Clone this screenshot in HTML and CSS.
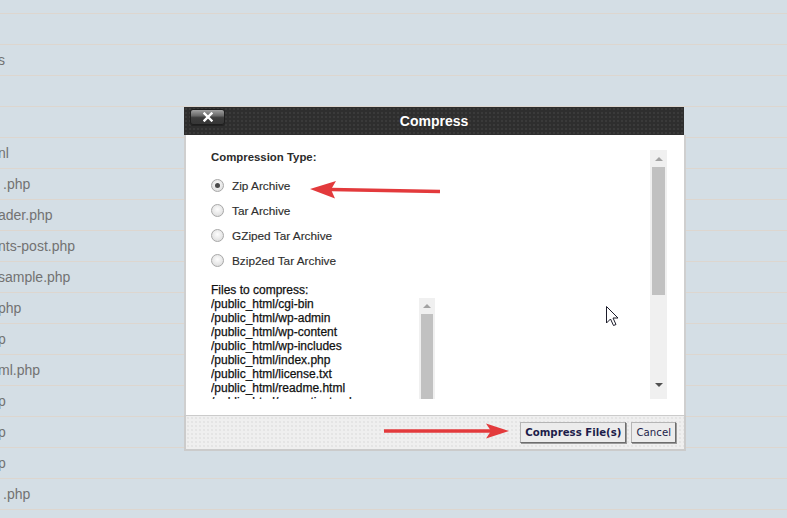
FILE: index.html
```html
<!DOCTYPE html>
<html>
<head>
<meta charset="utf-8">
<link rel="stylesheet" href="styles.css">
</head>
<body>
<div class="files">
  <div class="row-top"></div>
  <div class="row"></div>
  <div class="row"><span class="name">s</span></div>
  <div class="row"></div>
  <div class="row"></div>
  <div class="row"><span class="name">nl</span></div>
  <div class="row"><span class="name shift">.php</span></div>
  <div class="row"><span class="name">ader.php</span></div>
  <div class="row"><span class="name">nts-post.php</span></div>
  <div class="row"><span class="name">sample.php</span></div>
  <div class="row"><span class="name">php</span></div>
  <div class="row"><span class="name">p</span></div>
  <div class="row"><span class="name">ml.php</span></div>
  <div class="row"><span class="name">p</span></div>
  <div class="row"><span class="name">p</span></div>
  <div class="row"><span class="name">p</span></div>
  <div class="row"><span class="name shift">.php</span></div>
  <div class="row"></div>
</div>

<div class="dialog">
  <div class="dlg-head">
    <button class="close" type="button" aria-label="Close">
      <svg width="10" height="10" viewBox="0 0 10 10"><path d="M1.5 1.5 L8.5 8.5 M8.5 1.5 L1.5 8.5" stroke="#fff" stroke-width="2.4" stroke-linecap="square"/></svg>
    </button>
    <div class="title">Compress</div>
    <div></div>
  </div>
  <div class="dlg-body">
    <div class="content">
      <div class="label-b">Compression Type:</div>
      <div class="opts">
        <div class="opt"><span class="radio checked"></span><span>Zip Archive</span></div>
        <div class="opt"><span class="radio"></span><span>Tar Archive</span></div>
        <div class="opt"><span class="radio"></span><span>GZiped Tar Archive</span></div>
        <div class="opt"><span class="radio"></span><span>Bzip2ed Tar Archive</span></div>
      </div>
      <div class="files-title">Files to compress:</div>
      <div class="listbox">
        <div class="lines">
          <div>/public_html/cgi-bin</div>
          <div>/public_html/wp-admin</div>
          <div>/public_html/wp-content</div>
          <div>/public_html/wp-includes</div>
          <div>/public_html/index.php</div>
          <div>/public_html/license.txt</div>
          <div>/public_html/readme.html</div>
          <div>/public_html/wp-activate.php</div>
          <div>/public_html/wp-blog-header.php</div>
        </div>
        <div class="lscroll">
          <div class="lbtn"><span class="tri-up"></span></div>
          <div class="lthumb"></div>
        </div>
      </div>
    </div>
    <div class="vscroll">
      <div class="vbtn"><span class="tri-up"></span></div>
      <div class="vthumb"></div>
      <div class="vspace"></div>
      <div class="vbtn down"><span class="tri-down"></span></div>
    </div>
  </div>
  <div class="dlg-foot">
    <button class="btn strong" type="button">Compress File(s)</button>
    <button class="btn" type="button">Cancel</button>
  </div>
</div>

<svg class="overlay" width="787" height="518" viewBox="0 0 787 518">
  <path d="M331 189.5 L440 191.5" stroke="#e33a3c" stroke-width="3.6" fill="none"/>
  <polygon points="310,189 336,181 331,189.5 335,198.5" fill="#e33a3c"/>
  <path d="M384 431 L492 431" stroke="#e33a3c" stroke-width="3.4" fill="none"/>
  <polygon points="509,431 486,423.5 491,431 486,438.5" fill="#e33a3c"/>
  <path d="M606.5 306.5 V323 L610.5 319 L613.5 325.5 L616 324.5 L613 318 H618 Z" fill="#fff" stroke="#1d1d2b" stroke-width="1" stroke-linejoin="miter"/>
</svg>
</body>
</html>
```
FILE: styles.css
```css
html, body {
  margin: 0;
  padding: 0;
}
body {
  width: 787px;
  height: 518px;
  overflow: hidden;
  background: #d4dee5;
  font-family: "Liberation Sans", Arial, sans-serif;
  position: relative;
}
.files {
  display: flex;
  flex-direction: column;
}
.row-top {
  height: 13px;
}
.row {
  height: 30px;
  border-top: 1px solid #ddd6cf;
  line-height: 30px;
  font-size: 14px;
  color: #727272;
  white-space: nowrap;
}
.name {
  display: inline-block;
  margin-left: -2px;
}
.name.shift {
  margin-left: 3px;
}

.dialog {
  position: absolute;
  left: 184px;
  top: 107px;
  width: 502px;
  display: flex;
  flex-direction: column;
}
.dlg-head {
  height: 28px;
  width: 500px;
  background-color: #2e2e2e;
  background-image: radial-gradient(#3a3a3a 0.8px, transparent 1px);
  background-size: 4px 4px;
  display: grid;
  grid-template-columns: 1fr auto 1fr;
  align-items: center;
}
.close {
  justify-self: start;
  align-self: start;
  margin: 2px 0 0 6px;
  width: 35px;
  height: 16px;
  padding: 0;
  border: 1px solid #1e1e1e;
  border-radius: 3px;
  background: linear-gradient(#a2a2a2 0%, #6a6a6a 40%, #3c3c3c 55%, #363636 100%);
  display: flex;
  align-items: center;
  justify-content: center;
  box-shadow: 0 1px 0 #222;
}
.close svg {
  display: block;
}
.title {
  color: #fff;
  font-weight: bold;
  font-size: 14px;
}

.dlg-body {
  height: 280px;
  box-sizing: border-box;
  background: #fff;
  border-left: 2px solid #cfcfcf;
  border-right: 2px solid #cfcfcf;
  padding: 15px 17px 0 25px;
  display: flex;
}
.content {
  flex: 1;
  height: 249px;
  overflow: hidden;
  color: #333;
}
.label-b {
  font-size: 11.4px;
  font-weight: bold;
  line-height: 14px;
  color: #2b2b2b;
}
.opts {
  margin-top: 9px;
  display: flex;
  flex-direction: column;
}
.opt {
  height: 25px;
  display: flex;
  align-items: center;
  font-size: 11.8px;
  color: #2e2e2e;
  -webkit-text-stroke: 0.15px #2e2e2e;
}
.radio {
  width: 11px;
  height: 11px;
  border: 1px solid #a8a8a8;
  border-radius: 50%;
  background: radial-gradient(circle at 50% 40%, #fdfdfd 0%, #e6e6e6 60%, #d6d6d6 100%);
  margin-right: 8px;
  display: flex;
  align-items: center;
  justify-content: center;
  -webkit-text-stroke: 0;
}
.radio.checked::after {
  content: "";
  width: 5px;
  height: 5px;
  border-radius: 50%;
  background: #4a4a4a;
}
.files-title {
  margin-top: 10px;
  font-size: 12px;
  line-height: 14px;
  color: #111;
  -webkit-text-stroke: 0.25px #111;
}
.listbox {
  width: 224px;
  height: 110px;
  display: flex;
}
.lines {
  flex: 1;
  font-size: 12px;
  line-height: 14px;
  color: #111;
  -webkit-text-stroke: 0.25px #111;
  overflow: hidden;
  white-space: nowrap;
}
.lscroll {
  width: 16px;
  margin-top: 1px;
  background: #f0f0f0;
  display: flex;
  flex-direction: column;
  align-items: center;
}
.lbtn {
  height: 16px;
  width: 16px;
  display: flex;
  align-items: center;
  justify-content: center;
}
.lthumb {
  width: 12px;
  flex: 1;
  background: #c1c1c1;
}
.tri-up {
  width: 0;
  height: 0;
  border-left: 4px solid transparent;
  border-right: 4px solid transparent;
  border-bottom: 4px solid #a3a3a3;
}
.tri-down {
  width: 0;
  height: 0;
  border-left: 4px solid transparent;
  border-right: 4px solid transparent;
  border-top: 4px solid #505050;
}
.vscroll {
  width: 17px;
  height: 249px;
  background: #f0f0f0;
  display: flex;
  flex-direction: column;
  align-items: center;
}
.vbtn {
  height: 17px;
  width: 17px;
  display: flex;
  align-items: center;
  justify-content: center;
}
.vbtn.down {
  height: 16px;
  align-items: flex-start;
}
.vthumb {
  width: 13px;
  height: 128px;
  background: #c1c1c1;
}
.vspace {
  flex: 1;
}

.dlg-foot {
  height: 36px;
  box-sizing: border-box;
  background-color: #efefef;
  background-image: radial-gradient(#e4e4e4 0.7px, transparent 1px);
  background-size: 4px 4px;
  border: 2px solid #cbcbcb;
  border-top: 1px solid #cbcbcb;
  display: flex;
  justify-content: flex-end;
  align-items: center;
  gap: 5px;
  padding-right: 8px;
}
.btn {
  height: 21px;
  box-sizing: border-box;
  padding: 0 4px;
  border: 1px solid #b5b5b5;
  border-right-color: #6d6d6d;
  border-bottom-color: #6d6d6d;
  box-shadow: 1px 1px 0 #9a9a9a;
  background: #ececec;
  font-family: "DejaVu Sans", Verdana, sans-serif;
  font-size: 10.2px;
  color: #1c1c4a;
  line-height: 19px;
}
.btn.strong {
  font-weight: bold;
}

.overlay {
  position: absolute;
  left: 0;
  top: 0;
  pointer-events: none;
}
```
